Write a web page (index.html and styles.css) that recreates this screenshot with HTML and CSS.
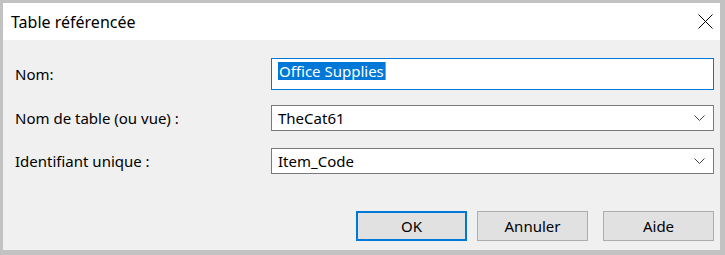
FILE: index.html
```html
<!DOCTYPE html>
<html lang="fr">
<head>
    <meta charset="UTF-8">
    <title>Table référencée</title>
    <link rel="stylesheet" href="styles.css">
</head>
<body>
    <div class="window">
        <div class="titlebar">
            <span class="title">Table référencée</span>
            <svg class="close" width="15" height="15" viewBox="0 0 15 15">
                <path d="M0.5 0.5 L14.5 14.5 M14.5 0.5 L0.5 14.5" stroke="#000" stroke-width="1" fill="none"/>
            </svg>
        </div>

        <div class="content">
            <div class="form">
                <div class="row row-name">
                    <span class="label">Nom:</span>
                    <div class="field text-field focused">
                        <span class="selected">Office Supplies</span><span class="caret"></span>
                    </div>
                </div>

                <div class="row row-table">
                    <span class="label">Nom de table (ou vue) :</span>
                    <div class="field combo">
                        <span class="value">TheCat61</span>
                        <svg class="chevron" width="11" height="6" viewBox="0 0 11 6">
                            <path d="M0.5 0.5 L5.5 5.5 L10.5 0.5" stroke="#444" stroke-width="1" fill="none"/>
                        </svg>
                    </div>
                </div>

                <div class="row row-key">
                    <span class="label">Identifiant unique :</span>
                    <div class="field combo">
                        <span class="value">Item_Code</span>
                        <svg class="chevron" width="11" height="6" viewBox="0 0 11 6">
                            <path d="M0.5 0.5 L5.5 5.5 L10.5 0.5" stroke="#444" stroke-width="1" fill="none"/>
                        </svg>
                    </div>
                </div>
            </div>

            <div class="buttons">
                <button class="btn btn-default">OK</button>
                <button class="btn">Annuler</button>
                <button class="btn btn-help">Aide</button>
            </div>
        </div>
    </div>
</body>
</html>
```

FILE: styles.css
```css
* { margin: 0; padding: 0; box-sizing: border-box; }

body {
    font-family: 'Noto Sans', 'Segoe UI', sans-serif;
    font-size: 15px;
    color: #000;
    background: #c2c2c2;
    width: 725px;
    height: 255px;
    padding: 3px 5px 5px 3px;
    overflow: hidden;
}

.window {
    display: flex;
    flex-direction: column;
    height: 100%;
}

.titlebar {
    height: 37px;
    background: #ffffff;
    display: flex;
    align-items: center;
    justify-content: space-between;
    padding: 0 7px 0 8px;
}

.title {
    font-size: 16px;
    line-height: 18px;
}

.close { display: block; }

.content {
    flex: 1;
    background: #f0f0f0;
    display: flex;
    flex-direction: column;
    padding: 18px 6px 9px 12px;
}

.row {
    display: flex;
    align-items: center;
}

.row-table { margin-top: 15px; }
.row-key { margin-top: 17px; }

.label {
    width: 256px;
    line-height: 18px;
}

.field {
    flex: 1;
    background: #ffffff;
    border: 1px solid #7a7a7a;
    display: flex;
    align-items: center;
}

.text-field {
    height: 32px;
    align-items: flex-start;
    padding: 3px 0 0 6px;
}

.focused { border-color: #0078d7; }

.selected {
    background: #0078d7;
    color: #ffffff;
    line-height: 18px;
    padding: 0 1px;
}

.caret {
    width: 1px;
    height: 18px;
    background: #f08a24;
}

.combo {
    height: 26px;
    padding: 0 8px 0 6px;
    justify-content: space-between;
}

.value { line-height: 18px; }

.chevron { display: block; }

.buttons {
    margin-top: auto;
    display: flex;
    justify-content: flex-end;
    gap: 10px;
}

.btn {
    width: 111px;
    height: 30px;
    font-family: inherit;
    font-size: 15px;
    color: #000;
    background: #e1e1e1;
    border: 1px solid #adadad;
}

.btn-default { border: 2px solid #0078d7; }
.btn-help { margin-left: 5px; }
```
